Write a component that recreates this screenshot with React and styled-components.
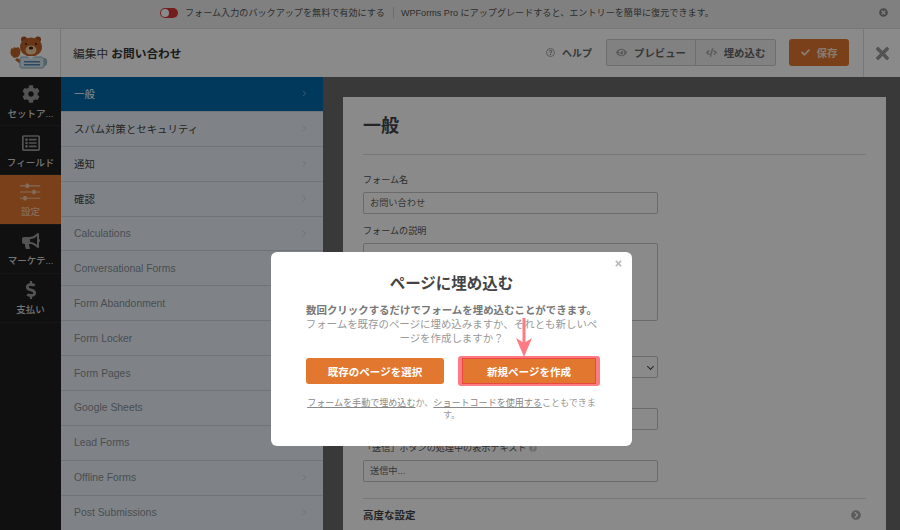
import React from 'react';
import styled, { createGlobalStyle } from 'styled-components';
import { ChevronRight } from 'lucide-react';
import { FaCog, FaRegListAlt, FaBullhorn, FaDollarSign, FaTimes, FaEye, FaCode, FaCheck, FaRegQuestionCircle, FaChevronCircleRight, FaTimesCircle, FaQuestionCircle } from 'react-icons/fa';

const GlobalStyle = createGlobalStyle`
  html, body {
    margin: 0;
    padding: 0;
    height: 100%;
    overflow: hidden;
    font-family: "Liberation Sans", "Noto Sans CJK JP", sans-serif;
  }
  * { box-sizing: border-box; }
`;

const Sliders = () => (
  <svg width="18" height="16" viewBox="0 0 18 16" fill="currentColor">
    <path d="M0 2h18v1H0zM0 7.5h18v1H0zM0 13h18v1H0z" />
    <rect x="5" y="0.5" width="3" height="4" rx="1" />
    <rect x="11" y="6" width="3" height="4" rx="1" />
    <rect x="3" y="11.5" width="3" height="4" rx="1" />
  </svg>
);

const sideItems = [
  { label: 'セットア...', Icon: FaCog },
  { label: 'フィールド', Icon: FaRegListAlt },
  { label: '設定', Icon: Sliders, active: true },
  { label: 'マーケテ...', Icon: FaBullhorn },
  { label: '支払い', Icon: FaDollarSign },
];

const menuItems = [
  { label: '一般', active: true },
  { label: 'スパム対策とセキュリティ' },
  { label: '通知' },
  { label: '確認' },
  { label: 'Calculations', muted: true },
  { label: 'Conversational Forms', muted: true },
  { label: 'Form Abandonment', muted: true },
  { label: 'Form Locker', muted: true },
  { label: 'Form Pages', muted: true },
  { label: 'Google Sheets', muted: true },
  { label: 'Lead Forms', muted: true },
  { label: 'Offline Forms', muted: true },
  { label: 'Post Submissions', muted: true },
];

const Bear = () => (
  <svg width="40" height="34" viewBox="0 0 40 34">
    <path d="M1 19c-1-3 0-7 1-7l1 1 1-2 2 1 2-1 2 2c1 3 0 7-2 8l-4 1z" fill="#c0622a" />
    <path d="M7 22l6 3-1 4-7-5z" fill="#c0622a" />
    <circle cx="14" cy="3.5" r="3" fill="#a8501e" />
    <circle cx="28" cy="3.5" r="3" fill="#a8501e" />
    <ellipse cx="21" cy="11" rx="11" ry="9.5" fill="#c0622a" />
    <ellipse cx="21" cy="14" rx="5.5" ry="4.5" fill="#f0c9a0" />
    <ellipse cx="21" cy="12" rx="2.2" ry="1.5" fill="#3a2012" />
    <circle cx="16" cy="8" r="1" fill="#3a2012" />
    <circle cx="26" cy="8" r="1" fill="#3a2012" />
    <path d="M35 22c3 1 3 7 0 8l-3-1v-7z" fill="#9fb6bf" />
    <path d="M11 21h21l2 2v8l-1 1H11l-1-1v-8z" fill="#d9e8ef" stroke="#8fb0c4" strokeWidth="1" />
    <path d="M14 25h16v1.6H14zM14 28h16v1.6H14z" fill="#4f86b0" />
    <path d="M17 20l4 3 4-3z" fill="#fff" />
  </svg>
);

const Arrow = () => (
  <ArrowBox width="18" height="40" viewBox="0 0 18 40">
    <path d="M7.5 0h3v26h-3z" fill="#ff7b84" />
    <path d="M1 20l8 5 8-5-8 19z" fill="#ff7b84" />
  </ArrowBox>
);

const App = () => (
  <>
    <GlobalStyle />
    <Page>
      <Notice>
        <Toggle />
        <NoticeText>フォーム入力のバックアップを無料で有効にする</NoticeText>
        <NoticeBar />
        <NoticeText>WPForms Pro にアップグレードすると、エントリーを簡単に復元できます。</NoticeText>
        <NoticeClose><FaTimesCircle /></NoticeClose>
      </Notice>

      <Header>
        <LogoCell><Bear /></LogoCell>
        <FormTitle>編集中 <strong>お問い合わせ</strong></FormTitle>
        <HeaderRight>
          <Help><FaRegQuestionCircle /><span>ヘルプ</span></Help>
          <ButtonGroup>
            <GroupButton $width={88}><FaEye /><span>プレビュー</span></GroupButton>
            <GroupButton $width={80}><FaCode /><span>埋め込む</span></GroupButton>
          </ButtonGroup>
          <SaveButton><FaCheck /><span>保存</span></SaveButton>
          <ExitCell><FaTimes /></ExitCell>
        </HeaderRight>
      </Header>

      <Body>
        <Sidebar>
          {sideItems.map(({ label, Icon, active }) => (
            <SideItem key={label} $active={active}>
              <Icon />
              <span>{label}</span>
            </SideItem>
          ))}
        </Sidebar>

        <Menu>
          {menuItems.map(item => (
            <MenuRow key={item.label} $active={item.active} $muted={item.muted}>
              <span>{item.label}</span>
              <ChevronRight size={9} strokeWidth={1.6} />
            </MenuRow>
          ))}
        </Menu>

        <Content>
          <Panel>
            <PanelTitle>一般</PanelTitle>
            <Field>
              <FieldLabel>フォーム名</FieldLabel>
              <TextInput>お問い合わせ</TextInput>
            </Field>
            <Field>
              <FieldLabel>フォームの説明</FieldLabel>
              <TextArea />
            </Field>
            <Field $top={35}>
              <SelectInput />
            </Field>
            <Field $top={30}>
              <TextInput />
            </Field>
            <Field $top={12}>
              <FieldLabel>「送信」ボタンの処理中の表示テキスト <FaQuestionCircle /></FieldLabel>
              <TextInput>送信中...</TextInput>
            </Field>
            <Advanced>
              <span>高度な設定</span>
              <FaChevronCircleRight />
            </Advanced>
          </Panel>
        </Content>
      </Body>

      <Overlay>
        <Modal>
          <ModalClose><FaTimes /></ModalClose>
          <ModalTitle>ページに埋め込む</ModalTitle>
          <ModalLead>数回クリックするだけでフォームを埋め込むことができます。</ModalLead>
          <ModalText>フォームを既存のページに埋め込みますか、それとも新しいページを作成しますか？</ModalText>
          <ModalActions>
            <ModalButton>既存のページを選択</ModalButton>
            <HighlightWrap>
              <ModalButton $wide>新規ページを作成</ModalButton>
              <Arrow />
            </HighlightWrap>
          </ModalActions>
          <ModalFoot><a>フォームを手動で埋め込む</a>か、<a>ショートコードを使用する</a>こともできます。</ModalFoot>
        </Modal>
      </Overlay>
    </Page>
  </>
);

const Page = styled.div`
  position: relative;
  width: 900px;
  height: 530px;
  overflow: hidden;
  display: flex;
  flex-direction: column;
  background: #6a6a6a;
`;

const Notice = styled.div`
  position: relative;
  height: 28px;
  flex: none;
  display: flex;
  align-items: center;
  padding: 0 0 3px 160px;
  background: #ededed;
  color: #555;
`;

const Toggle = styled.span`
  position: relative;
  width: 18px;
  height: 10px;
  margin-right: 7px;
  border-radius: 5px;
  background: #d63638;

  &::after {
    content: '';
    position: absolute;
    left: 1px;
    top: 1px;
    width: 8px;
    height: 8px;
    border-radius: 50%;
    background: #fff;
  }
`;

const NoticeText = styled.span`
  font-size: 9.1px;
  line-height: 14px;
  white-space: nowrap;
`;

const NoticeBar = styled.span`
  width: 1px;
  height: 11px;
  margin: 0 7px 0 8px;
  background: #c8c8c8;
`;

const NoticeClose = styled.span`
  position: absolute;
  right: 12px;
  top: 8px;
  font-size: 9px;
  line-height: 9px;
  color: #888;
`;

const Header = styled.div`
  height: 49px;
  flex: none;
  display: flex;
  align-items: center;
  background: #fff;
  border-top: 1px solid #ddd;
`;

const LogoCell = styled.div`
  width: 61px;
  height: 100%;
  flex: none;
  display: flex;
  align-items: center;
  justify-content: center;
  border-right: 1px solid #ddd;
`;

const FormTitle = styled.div`
  margin: 0 0 2px 12px;
  font-size: 11.7px;
  color: #444;

  strong {
    color: #333;
  }
`;

const HeaderRight = styled.div`
  margin-left: auto;
  height: 100%;
  display: flex;
  align-items: center;
`;

const Help = styled.div`
  display: flex;
  align-items: center;
  gap: 7px;
  margin: 0 14px 1px 0;
  font-size: 10px;
  font-weight: 700;
  color: #666;

  svg {
    font-size: 9px;
    color: #999;
  }
`;

const ButtonGroup = styled.div`
  display: flex;
  height: 27px;
  margin: 0 13px 1px 0;
  border: 1px solid #ccc;
  border-radius: 2px;
  background: #eee;
`;

const GroupButton = styled.div`
  width: ${p => p.$width}px;
  display: flex;
  align-items: center;
  justify-content: center;
  gap: 7px;
  font-size: 10.4px;
  font-weight: 700;
  color: #666;

  & + & {
    border-left: 1px solid #ccc;
  }

  svg {
    font-size: 11px;
    color: #aaa;
  }
`;

const SaveButton = styled.div`
  width: 60px;
  height: 27px;
  margin-bottom: 1px;
  display: flex;
  align-items: center;
  justify-content: center;
  gap: 7px;
  border-radius: 3px;
  background: #e27730;
  color: #fbe3d3;
  font-size: 10.5px;
  font-weight: 700;

  svg {
    font-size: 9px;
  }
`;

const ExitCell = styled.div`
  width: 37px;
  height: 100%;
  margin-left: 14px;
  display: flex;
  align-items: center;
  justify-content: center;
  border-left: 1px solid #ddd;
  color: #999;
  font-size: 19px;
`;

const Body = styled.div`
  flex: 1;
  min-height: 0;
  display: flex;
`;

const Sidebar = styled.div`
  width: 61px;
  flex: none;
  background: #1f1f1f;
`;

const SideItem = styled.div`
  height: 49.2px;
  padding-top: 2px;
  display: flex;
  flex-direction: column;
  align-items: center;
  justify-content: center;
  gap: 3px;
  background: ${p => (p.$active ? '#e27730' : 'transparent')};
  border-bottom: 1px solid #2a2a2a;
  color: ${p => (p.$active ? '#f3c8a8' : '#d8d8d8')};
  font-size: 9.5px;
  font-weight: 500;

  svg {
    height: 18px;
    width: auto;
    font-size: 18px;
    color: ${p => (p.$active ? '#f3c8a8' : '#9a9a9a')};
  }
`;

const Menu = styled.div`
  width: 262px;
  flex: none;
  background: #ebf3fb;
`;

const MenuRow = styled.div`
  height: 34.9px;
  display: flex;
  align-items: center;
  justify-content: space-between;
  padding: 0 14px 0 13px;
  border-bottom: 1px solid #ced7e0;
  background: ${p => (p.$active ? '#036aab' : 'transparent')};
  color: ${p => (p.$active ? '#fff' : p.$muted ? '#8a8f94' : '#444')};
  font-size: 10.4px;

  svg {
    color: ${p => (p.$active ? '#c0d4e8' : '#b5bcc4')};
  }
`;

const Content = styled.div`
  flex: 1;
  padding: 20px 14px 0 20px;
`;

const Panel = styled.div`
  height: 520px;
  padding: 17px 20px;
  background: #fff;
`;

const PanelTitle = styled.h1`
  height: 41px;
  margin: 0 0 19px;
  font-size: 18px;
  line-height: 24px;
  font-weight: 700;
  color: #444;
  border-bottom: 1px solid #ddd;
`;

const Field = styled.div`
  margin-top: ${p => p.$top || 0}px;
  margin-bottom: 11px;
`;

const FieldLabel = styled.div`
  margin-bottom: 6px;
  font-size: 9.1px;
  line-height: 12px;
  color: #555;

  svg {
    font-size: 8px;
    color: #ccc;
    vertical-align: -1px;
  }
`;

const TextInput = styled.div`
  width: 295px;
  height: 22px;
  padding: 0 6px;
  border: 1px solid #c4c4c4;
  border-radius: 2px;
  background: #fff;
  font-size: 9.2px;
  line-height: 20px;
  color: #666;
`;

const TextArea = styled(TextInput)`
  height: 78px;
`;

const SelectInput = styled(TextInput)`
  position: relative;

  &::after {
    content: '';
    position: absolute;
    right: 4px;
    top: 7px;
    width: 4px;
    height: 4px;
    border-right: 1.5px solid #444;
    border-bottom: 1.5px solid #444;
    transform: rotate(45deg);
  }
`;

const Advanced = styled.div`
  margin-top: 16px;
  padding: 8px 5px 0 0;
  border-top: 1px solid #ddd;
  display: flex;
  justify-content: space-between;
  align-items: center;
  font-size: 10.5px;
  font-weight: 700;
  color: #444;

  svg {
    font-size: 10px;
    color: #aaa;
  }
`;

const Overlay = styled.div`
  position: absolute;
  inset: 0;
  display: flex;
  align-items: center;
  justify-content: center;
  padding: 168px 0 0 3px;
  background: rgba(0, 0, 0, 0.46);
`;

const Modal = styled.div`
  position: relative;
  width: 361px;
  height: 194px;
  padding: 21px 35px 0;
  border-radius: 6px;
  background: #fff;
  text-align: center;
`;

const ModalClose = styled.span`
  position: absolute;
  right: 9px;
  top: 7px;
  font-size: 9px;
  color: #bbb;
`;

const ModalTitle = styled.h2`
  margin: 0 0 9px;
  font-size: 15.5px;
  line-height: 22px;
  font-weight: 700;
  color: #444;
`;

const ModalLead = styled.p`
  margin: 0 -2px;
  font-size: 10.45px;
  line-height: 14px;
  font-weight: 700;
  color: #777;
  white-space: nowrap;
`;

const ModalText = styled.p`
  margin: 0 -2px;
  font-size: 10.45px;
  line-height: 14px;
  color: #999;
`;

const ModalActions = styled.div`
  display: flex;
  justify-content: space-between;
  align-items: center;
  height: 30px;
  margin: 10px -3px 0 0;
`;

const ModalButton = styled.div`
  width: ${p => (p.$wide ? '134px' : '138px')};
  height: 26px;
  display: flex;
  align-items: center;
  justify-content: center;
  border-radius: ${p => (p.$wide ? '0' : '3px')};
  border: ${p => (p.$wide ? '1px solid #e8483f' : 'none')};
  background: #e27730;
  color: #fff;
  font-size: 10.5px;
  font-weight: 700;
`;

const HighlightWrap = styled.div`
  position: relative;
  padding: 2px 4px;
  border-radius: 3px;
  background: #ff7b84;
`;

const ArrowBox = styled.svg`
  position: absolute;
  left: 57px;
  top: -38px;
`;

const ModalFoot = styled.p`
  margin: 11px 0 0;
  font-size: 9.05px;
  line-height: 12px;
  color: #999;

  a {
    color: #888;
    text-decoration: underline;
  }
`;

export default App;
